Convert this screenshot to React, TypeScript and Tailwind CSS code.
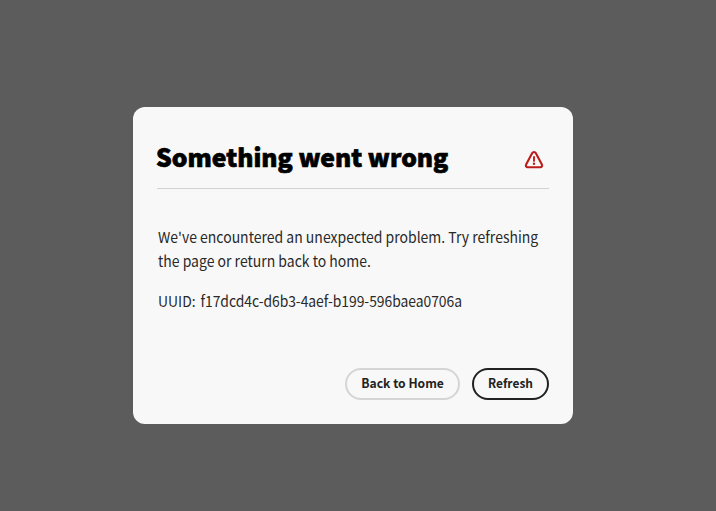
function AlertIcon() {
  return (
    <svg width="20" height="20" viewBox="0 0 20 20" fill="none" aria-hidden="true">
      <path
        d="M8.25 3.05 L2.1 14.6 C1.4 16 2.3 17.2 3.7 17.2 H16.3 C17.7 17.2 18.6 16 17.9 14.6 L11.75 3.05 C11 1.65 9 1.65 8.25 3.05 Z"
        stroke="#bd1c1a"
        strokeWidth="2.1"
        strokeLinejoin="round"
      />
      <path d="M10 7 V10.9" stroke="#bd1c1a" strokeWidth="1.9" strokeLinecap="round" />
      <circle cx="10" cy="13.8" r="1.2" fill="#bd1c1a" />
    </svg>
  );
}

export default function App() {
  return (
    <div className="flex h-[511px] w-[716px] items-start overflow-hidden bg-[#5c5c5c] pt-[107px] pl-[133px] font-['Noto_Sans_CJK_JP','Open_Sans',sans-serif]">
      <section className="flex h-[317px] w-[440px] flex-col rounded-xl bg-[#f8f8f8] px-6 pb-6">
        <header className="flex h-[82px] items-end justify-between border-b border-[#d2d2d2] pb-[13px]">
          <h1 className="mb-px -ml-px text-[25px] leading-9 font-black whitespace-nowrap text-black [-webkit-text-stroke:0.7px_black]">
            <span className="inline-block origin-left scale-x-[0.987]">Something went wrong</span>
          </h1>
          <div className="mr-[5px] mb-[5px]">
            <AlertIcon />
          </div>
        </header>
        <div className="pt-[36px] pl-px text-[15px] leading-6 whitespace-nowrap text-[#292929]">
          <p>
            <span className="block w-max origin-left scale-x-[0.933]">
              We've encountered an unexpected problem. Try refreshing
            </span>
            <span className="block w-max origin-left scale-x-[0.933]">the page or return back to home.</span>
          </p>
          <p className="mt-4">
            <span className="block w-max origin-left scale-x-[0.927]">
              <span className="mr-[2px]">UUID:</span> <span className="tracking-[-0.05px]">f17dcd4c-d6b3-4aef-b199-596baea0706a</span>
            </span>
          </p>
        </div>
        <footer className="mt-auto flex justify-end gap-3 text-[12.5px] font-bold whitespace-nowrap text-[#222]">
          <button className="flex h-8 w-[115px] items-center justify-center rounded-full border-2 border-[#d5d5d5] pb-px">
            <span className="inline-block scale-x-[0.97]">Back to Home</span>
          </button>
          <button className="flex h-8 w-[77px] items-center justify-center rounded-full border-2 border-[#222] pb-px">
            <span className="inline-block scale-x-[0.957]">Refresh</span>
          </button>
        </footer>
      </section>
    </div>
  );
}
